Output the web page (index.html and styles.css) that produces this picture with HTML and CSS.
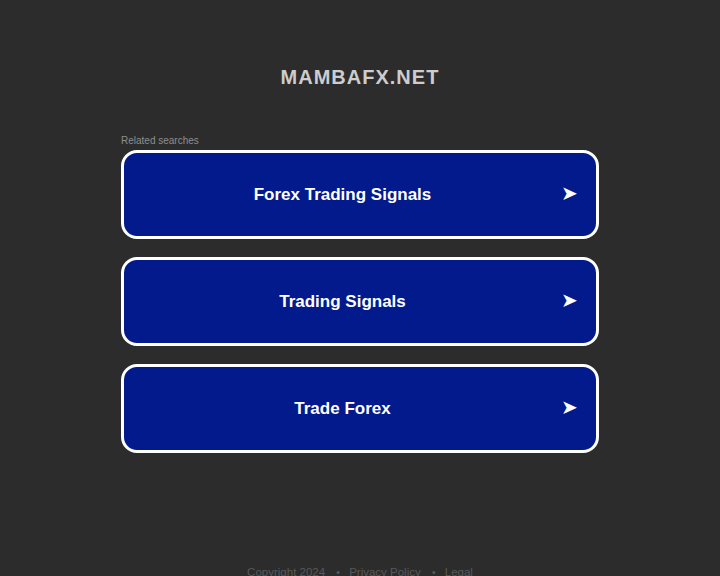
FILE: index.html
```html
<!DOCTYPE html>
<html lang="en">
<head>
<meta charset="utf-8">
<title>mambafx.net</title>
<link rel="stylesheet" href="styles.css">
</head>
<body>
<div class="page">
  <header class="header">
    <h1 class="domain">MAMBAFX.NET</h1>
  </header>
  <main class="related">
    <div class="related-title">Related searches</div>
    <div class="links">
      <a class="link" href="#"><span class="link-text">Forex Trading Signals</span><span class="arrow">➤</span></a>
      <a class="link" href="#"><span class="link-text">Trading Signals</span><span class="arrow">➤</span></a>
      <a class="link" href="#"><span class="link-text">Trade Forex</span><span class="arrow">➤</span></a>
    </div>
  </main>
  <footer class="footer">
    <span>Copyright 2024</span><span class="dot">•</span><a href="#">Privacy Policy</a><span class="dot">•</span><a href="#">Legal</a>
  </footer>
</div>
</body>
</html>
```

FILE: styles.css
```css
html, body {
  margin: 0;
  padding: 0;
  background: #2c2c2c;
  font-family: "Liberation Sans", Arial, sans-serif;
}
.page {
  width: 478px;
  margin: 0 auto;
  display: flex;
  flex-direction: column;
}
.header {
  padding-top: 65px;
  display: flex;
  justify-content: center;
}
.domain {
  margin: 0;
  font-size: 20px;
  line-height: 24px;
  font-weight: bold;
  letter-spacing: 1px;
  color: #cdcdcd;
}
.related {
  margin-top: 46px;
}
.related-title {
  font-size: 10px;
  line-height: 12px;
  color: #8e8e8e;
  margin-bottom: 3px;
}
.links {
  display: flex;
  flex-direction: column;
  gap: 18px;
}
.link {
  box-sizing: border-box;
  height: 89px;
  border: 3px solid #ffffff;
  border-radius: 16px;
  background: #021a8c;
  color: #ffffff;
  text-decoration: none;
  display: flex;
  align-items: center;
  padding-right: 19px;
}
.link-text {
  flex: 1;
  text-align: center;
  font-size: 17px;
  font-weight: bold;
}
.arrow {
  font-family: "DejaVu Sans", sans-serif;
  font-size: 20px;
  width: 16px;
  line-height: 1;
  margin-bottom: 3px;
}
.footer {
  margin-top: 112px;
  display: flex;
  justify-content: center;
  font-size: 11.5px;
  line-height: 14px;
  color: #585858;
}
.footer a {
  color: #585858;
  text-decoration: none;
}
.dot {
  margin: 0 9px 0 11px;
}
```
